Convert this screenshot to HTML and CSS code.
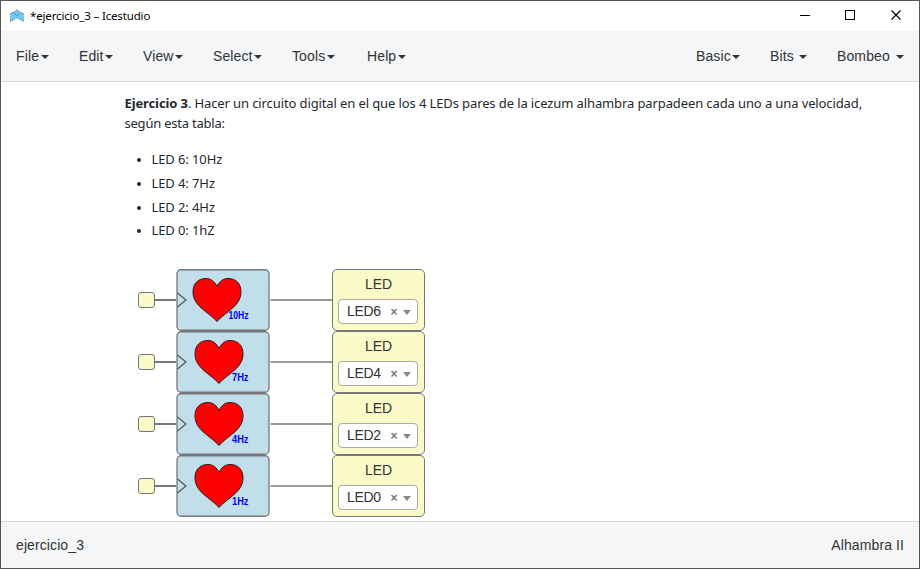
FILE: index.html
```html
<!DOCTYPE html>
<html lang="es">
<head>
<meta charset="utf-8">
<title>*ejercicio_3 – Icestudio</title>
<link rel="stylesheet" href="styles.css">
</head>
<body>
<div class="window">
  <header class="titlebar">
    <svg class="logo" width="16" height="14" viewBox="0 0 16 14"><path d="M1 4.500 4.500 3.500 8 .8 11.500 3.500l3.500 1v8l-4-2L8 8.500 5 10.500 1 12.500z" fill="#73c8f0"/><path d="M1 4.500 4.500 3.500 8 .8 11.500 3.500 15 4.500M1 12.500 5 10.500 8 8.500l3 2 4 2M4.500 3.500 8 7l3.500-3.500" fill="none" stroke="#326f8d" stroke-width=".8" stroke-dasharray="1.500 .8"/></svg>
    <span class="title">*ejercicio_3 – Icestudio</span>
    <svg class="controls" width="104" height="12" viewBox="0 0 104 12" fill="none" stroke="#000"><path d="M0 5.500h10M45.500.5h9v9h-9z" shape-rendering="crispEdges"/><path d="M91.500.5l9 9M100.500.5l-9 9" stroke-width="1.200"/></svg>
  </header>
  <nav class="menubar">
    <div class="menu file">File<i class="caret wide"></i></div>
    <div class="menu edit">Edit<i class="caret"></i></div>
    <div class="menu view">View<i class="caret"></i></div>
    <div class="menu select-menu">Select<i class="caret"></i></div>
    <div class="menu tools">Tools<i class="caret wide"></i></div>
    <div class="menu help">Help<i class="caret wide"></i></div>
    <div class="menu basic">Basic<i class="caret"></i></div>
    <div class="menu bits">Bits <i class="caret spaced"></i></div>
    <div class="menu bombeo">Bombeo <i class="caret spaced"></i></div>
  </nav>
  <main class="canvas">
    <section class="note">
      <p><span class="line one"><b>Ejercicio 3</b>. Hacer un circuito digital en el que los 4 LEDs pares de la icezum alhambra parpadeen cada uno a una velocidad,</span><br><span class="line two">según esta tabla:</span></p>
      <ul>
        <li>LED 6: 10Hz</li>
        <li>LED 4: 7Hz</li>
        <li>LED 2: 4Hz</li>
        <li>LED 0: 1hZ</li>
      </ul>
    </section>
    <section class="circuit">
      <div class="row">
        <span class="port"></span><span class="wire in"></span>
        <svg class="pump" width="94" height="62" viewBox="-.5 0 94 62"><rect class="body" x=".5" y=".75" width="92" height="60.500" rx="4"/><path class="clock" d="M1 24l8.500 7L1 38"/><path class="heart" d="M40.500 17.500C38 12 34 9.500 29.500 9.500 21.500 9.500 16.500 14.500 16.500 23 16.500 37 32 43 40.500 52.500 49 43 64.500 37 64.500 23 64.500 14.500 59.500 9.500 51.500 9.500 47 9.500 43 12 40.500 17.500z"/><text x="52" y="50" textLength="20" lengthAdjust="spacingAndGlyphs">10Hz</text></svg>
        <svg class="link" width="62" height="2" viewBox="0 0 62 2"><path d="M.5 1H62"/></svg>
        <div class="led"><span class="label">LED</span><div class="choice"><span>LED6</span><b>×</b><i></i></div></div>
      </div>
      <div class="row">
        <span class="port"></span><span class="wire in"></span>
        <svg class="pump" width="94" height="62" viewBox="-.5 0 94 62"><rect class="body" x=".5" y=".75" width="92" height="60.500" rx="4"/><path class="clock" d="M1 24l8.500 7L1 38"/><path class="heart" transform="translate(2)" d="M40.500 17.500C38 12 34 9.500 29.500 9.500 21.500 9.500 16.500 14.500 16.500 23 16.500 37 32 43 40.500 52.500 49 43 64.500 37 64.500 23 64.500 14.500 59.500 9.500 51.500 9.500 47 9.500 43 12 40.500 17.500z"/><text x="55.500" y="50" textLength="16.500" lengthAdjust="spacingAndGlyphs">7Hz</text></svg>
        <svg class="link" width="62" height="2" viewBox="0 0 62 2"><path d="M.5 1H62"/></svg>
        <div class="led"><span class="label">LED</span><div class="choice"><span>LED4</span><b>×</b><i></i></div></div>
      </div>
      <div class="row">
        <span class="port"></span><span class="wire in"></span>
        <svg class="pump" width="94" height="62" viewBox="-.5 0 94 62"><rect class="body" x=".5" y=".75" width="92" height="60.500" rx="4"/><path class="clock" d="M1 24l8.500 7L1 38"/><path class="heart" transform="translate(2)" d="M40.500 17.500C38 12 34 9.500 29.500 9.500 21.500 9.500 16.500 14.500 16.500 23 16.500 37 32 43 40.500 52.500 49 43 64.500 37 64.500 23 64.500 14.500 59.500 9.500 51.500 9.500 47 9.500 43 12 40.500 17.500z"/><text x="55.500" y="50" textLength="16.500" lengthAdjust="spacingAndGlyphs">4Hz</text></svg>
        <svg class="link" width="62" height="2" viewBox="0 0 62 2"><path d="M.5 1H62"/></svg>
        <div class="led"><span class="label">LED</span><div class="choice"><span>LED2</span><b>×</b><i></i></div></div>
      </div>
      <div class="row">
        <span class="port"></span><span class="wire in"></span>
        <svg class="pump" width="94" height="62" viewBox="-.5 0 94 62"><rect class="body" x=".5" y=".75" width="92" height="60.500" rx="4"/><path class="clock" d="M1 24l8.500 7L1 38"/><path class="heart" transform="translate(2)" d="M40.500 17.500C38 12 34 9.500 29.500 9.500 21.500 9.500 16.500 14.500 16.500 23 16.500 37 32 43 40.500 52.500 49 43 64.500 37 64.500 23 64.500 14.500 59.500 9.500 51.500 9.500 47 9.500 43 12 40.500 17.500z"/><text x="55.500" y="50" textLength="16.500" lengthAdjust="spacingAndGlyphs">1Hz</text></svg>
        <svg class="link" width="62" height="2" viewBox="0 0 62 2"><path d="M.5 1H62"/></svg>
        <div class="led"><span class="label">LED</span><div class="choice"><span>LED0</span><b>×</b><i></i></div></div>
      </div>
    </section>
  </main>
  <footer class="statusbar"><span>ejercicio_3</span><span>Alhambra II</span></footer>
</div>
</body>
</html>
```

FILE: styles.css
```css
* { box-sizing: border-box; }
body { margin: 0; background: #fff; font: 14px/20px "Liberation Sans", Arial, sans-serif; color: #333; }
.window { width: 920px; height: 569px; border: 1px solid #555; display: flex; flex-direction: column; overflow: hidden; }
.titlebar { height: 30px; flex: none; display: flex; align-items: center; padding: 0 15px 0 8px; color: #000; font: 11.500px/16px "Noto Sans", sans-serif; }
.title { margin-left: 5px; letter-spacing: -.15px; white-space: nowrap; }
.logo { margin-top: -1px; }
.controls { margin-left: auto; }
.menubar { height: 51px; flex: none; display: flex; align-items: center; background: #f4f6f8; border-bottom: 1px solid #d3d9dc; padding-left: 15px; }
.menu { display: flex; align-items: center; white-space: nowrap; letter-spacing: .12px; flex: none; }
.file { width: 63px; }
.edit { width: 64px; }
.view { width: 70px; }
.select-menu { width: 79px; }
.tools { width: 75px; }
.basic { margin-left: auto; width: 74px; }
.bits { width: 67px; }
.bombeo { width: 82px; }
.caret { border: 4px solid transparent; border-top-color: #333; border-bottom: 0; margin-left: 1px; margin-top: 2px; }
.wide { margin-left: 2px; }
.spaced { margin-left: 5px; }
.bombeo .caret { margin-left: 6px; }
.canvas { flex: 1; min-height: 0; overflow: hidden; }
.note { padding: 11px 0 0 123.500px; height: 187px; font: 13px/20px "Noto Sans", sans-serif; color: #24292e; }
.note p { margin: 0; white-space: nowrap; }
.one { letter-spacing: -.11px; }
.two { letter-spacing: -.22px; }
.note ul { margin: 15px 0 0; padding-left: 27px; letter-spacing: -.1px; }
.note li { line-height: 23.750px; }
.note li::marker { font-size: 12px; }
.circuit { padding-left: 137px; }
.row { display: flex; align-items: center; height: 62px; }
.port { width: 16.500px; height: 16.500px; flex: none; border: 1px solid #777; border-radius: 3px; background: #fafac8; }
.wire { height: 1.500px; background: #777; flex: none; }
.in { width: 21.500px; }
.link { display: block; flex: none; }
.link path, .link { stroke: #777; stroke-width: 1.400px; }
.pump { display: block; flex: none; }
.body { fill: #c0dfeb; stroke: #777; stroke-width: 1.300px; }
.clock { fill: none; stroke: #555; stroke-width: 1.200px; }
.heart { fill: #f00; stroke: #222; stroke-width: 1px; }
.pump text { font: bold 10px "Liberation Sans", Arial, sans-serif; fill: #00f; }
.led { width: 93px; height: 62px; border: 1.300px solid #777; border-radius: 5px; background: #fafac8; text-align: center; padding: 4px 5px 0; }
.label { display: block; letter-spacing: -.1px; height: 25px; line-height: 21px; }
.choice { height: 25px; width: 80px; border: 1px solid #aaa; border-radius: 4px; background: #fff; display: flex; align-items: center; padding-left: 8px; }
.choice span { width: 43px; text-align: left; letter-spacing: -.3px; margin-top: -1px; }
.choice b { width: 8px; font-size: 12px; line-height: 12px; color: #777; }
.choice i { margin: 2px 0 0 5px; border: 4px solid transparent; border-top: 5px solid #888; border-bottom: 0; }
.statusbar { height: 47px; flex: none; border-top: 1px solid #d3d9dc; background: #f4f6f8; display: flex; align-items: center; justify-content: space-between; padding: 0 15px; letter-spacing: .1px; }
```
